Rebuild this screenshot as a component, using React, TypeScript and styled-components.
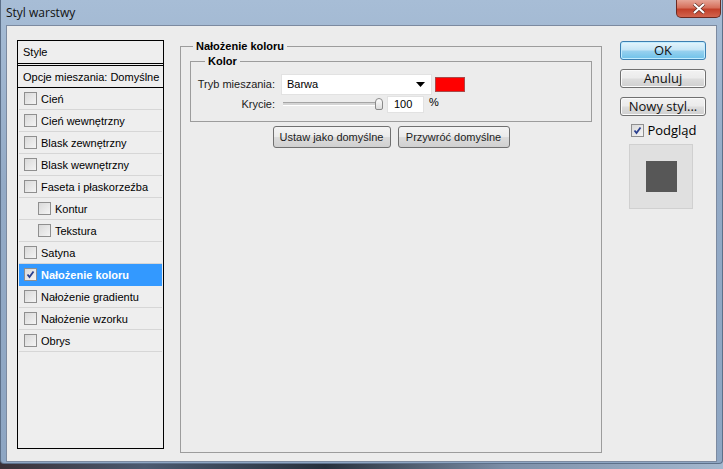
import React, { useState } from 'react';
import styled, { createGlobalStyle } from 'styled-components';

const GlobalStyle = createGlobalStyle`
  html, body {
    margin: 0;
    padding: 0;
    background: #2b2d33;
  }
  body {
    font-family: Tahoma, "Liberation Sans", Arial, sans-serif;
  }
`;

const Desktop = styled.div`
  width: 723px;
  height: 469px;
  overflow: hidden;
  background: linear-gradient(90deg, #3a3036 0%, #4b5a70 20%, #27303c 45%, #7d8fa8 70%, #a4b8cf 100%);
`;

const Frame = styled.div`
  width: 723px;
  height: 464px;
  box-sizing: border-box;
  padding: 0 5px 1px 5px;
  display: flex;
  flex-direction: column;
  background: linear-gradient(180deg, #a7bdd6 0%, #93aac6 40%, #8ea6c3 100%);
  border: 1px solid #5d7089;
  border-top: none;
  border-radius: 0 0 4px 4px;
`;

const TitleBar = styled.div`
  height: 25px;
  display: flex;
  align-items: center;
  justify-content: space-between;
  flex-shrink: 0;
`;

const Title = styled.div`
  font-family: "Open Sans", "Liberation Sans", sans-serif;
  font-size: 12px;
  color: #111;
  margin-top: -1px;
`;

const CloseButton = styled.div`
  width: 45px;
  height: 18px;
  align-self: flex-start;
  margin-right: -4px;
  border: 1px solid #6b2a22;
  border-top: none;
  border-radius: 0 0 5px 5px;
  background: linear-gradient(180deg, #e6a597 0%, #d6705c 45%, #c2402a 55%, #d2644e 100%);
  display: flex;
  align-items: center;
  justify-content: center;
  box-sizing: border-box;
`;

const Content = styled.div`
  flex: 1;
  background: #ececec;
  border: 1px solid #7c8aa0;
  display: flex;
  align-items: flex-start;
  padding: 14px 0 0 10px;
  box-sizing: border-box;
  font-size: 11px;
  color: #000;
  white-space: nowrap;
`;

const StyleList = styled.div`
  width: 147px;
  height: 409px;
  box-sizing: border-box;
  border: 1px solid #000;
  background: #eeeeee;
  display: flex;
  flex-direction: column;
`;

const ListHeader = styled.div`
  height: 22px;
  padding-left: 5px;
  display: flex;
  align-items: center;
  border-bottom: 3px double #000;
`;

const ListBlend = styled.div`
  height: 21px;
  padding-left: 5px;
  display: flex;
  align-items: center;
  border-bottom: 1px solid #000;
`;

const ListItem = styled.div<{ $indent?: boolean; $selected?: boolean }>`
  height: 21px;
  display: flex;
  align-items: center;
  gap: 4px;
  padding-left: ${(p) => (p.$indent ? 19 : 5)}px;
  margin: 0 1px;
  border-bottom: 1px solid ${(p) => (p.$selected ? '#3399ff' : '#d6d6d6')};
  background: ${(p) => (p.$selected ? '#3399ff' : 'transparent')};
  color: ${(p) => (p.$selected ? '#fff' : '#000')};
  font-weight: ${(p) => (p.$selected ? 'bold' : 'normal')};
`;

const Box = styled.span`
  width: 11px;
  height: 11px;
  border: 1px solid #8f8f8f;
  background: linear-gradient(135deg, #d9d9d9 0%, #f4f4f4 100%);
  display: inline-flex;
  align-items: center;
  justify-content: center;
  flex-shrink: 0;
`;

const Check = () => (
  <svg width="9" height="9" viewBox="0 0 9 9">
    <path d="M1.5 4.5 L3.5 7 L7.5 1.5" stroke="#2a3f8f" strokeWidth="1.8" fill="none" />
  </svg>
);

const Main = styled.fieldset`
  width: 422px;
  height: 413px;
  box-sizing: border-box;
  margin: 0 0 0 16px;
  padding: 0 9px;
  border: 1px solid #9c9c9c;
  border-radius: 0;
  display: flex;
  flex-direction: column;
  align-items: center;
`;

const Legend = styled.legend<{ $inset?: number }>`
  font-weight: bold;
  padding: 0 3px;
  margin-left: ${(p) => p.$inset ?? 3}px;
`;

const Inner = styled.fieldset`
  align-self: stretch;
  margin: 3px 0 0 0;
  padding: 7px 0 7px 0;
  border: 1px solid #9c9c9c;
  display: flex;
  flex-direction: column;
`;

const FormRow = styled.div`
  display: flex;
  align-items: center;
  height: 20px;
`;

const Label = styled.div`
  width: 84px;
  text-align: right;
  padding-right: 6px;
  color: #1b1b1b;
`;

const Select = styled.div`
  width: 151px;
  height: 21px;
  box-sizing: border-box;
  background: #fff;
  border: 1px solid #e2e2e2;
  display: flex;
  align-items: center;
  justify-content: space-between;
  padding: 0 6px 0 5px;
`;

const Swatch = styled.div`
  width: 30px;
  height: 15px;
  margin-left: 3px;
  background: #ff0000;
  border: 1px solid #a94a4a;
  box-sizing: border-box;
`;

const Slider = styled.div`
  position: relative;
  width: 100px;
  height: 16px;
  margin-left: 2px;
  display: flex;
  align-items: center;
`;

const Track = styled.div`
  width: 100%;
  height: 2px;
  border-top: 1px solid #a5a5a5;
  border-bottom: 1px solid #fff;
  background: #d4d4d4;
`;

const Thumb = styled.div`
  position: absolute;
  right: 0;
  top: 2px;
  width: 8px;
  height: 12px;
  box-sizing: border-box;
  border: 1px solid #8a8a8a;
  border-radius: 4px 4px 2px 2px;
  background: linear-gradient(180deg, #fdfdfd, #dcdcdc);
`;

const NumberBox = styled.div`
  width: 37px;
  height: 17px;
  margin-left: 4px;
  box-sizing: border-box;
  background: #fff;
  border: 1px solid #e2e2e2;
  display: flex;
  align-items: center;
  padding-left: 6px;
`;

const Unit = styled.div`
  margin-left: 5px;
  margin-top: -4px;
`;

const ButtonRow = styled.div`
  display: flex;
  gap: 7px;
  margin-top: 4px;
`;

const PsButton = styled.div<{ $w: number }>`
  width: ${(p) => p.$w}px;
  height: 22px;
  box-sizing: border-box;
  border: 1px solid #707070;
  border-radius: 3px;
  background: linear-gradient(180deg, #f4f4f4 0%, #ebebeb 48%, #dcdcdc 52%, #d0d0d0 100%);
  display: flex;
  align-items: center;
  justify-content: center;
  color: #1c1c1c;
`;

const Side = styled.div`
  margin-left: 18px;
  width: 86px;
  display: flex;
  flex-direction: column;
  align-items: center;
  gap: 9px;
  padding-top: 1px;
  font-family: "Open Sans", "Liberation Sans", sans-serif;
  font-size: 13px;
`;

const WinButton = styled.div<{ $default?: boolean }>`
  width: 86px;
  height: 19px;
  box-sizing: border-box;
  border: 1px solid ${(p) => (p.$default ? '#3c7fb1' : '#707070')};
  border-radius: 3px;
  background: ${(p) =>
    p.$default
      ? 'linear-gradient(180deg, #e5f5fc 0%, #c4e5f6 48%, #98d1ef 52%, #6ec2ea 100%)'
      : 'linear-gradient(180deg, #f2f2f2 0%, #ebebeb 48%, #dddddd 52%, #cfcfcf 100%)'};
  box-shadow: ${(p) => (p.$default ? 'inset 0 0 0 1px #c0ecff' : 'inset 0 0 0 1px #fafafa')};
  display: flex;
  align-items: center;
  justify-content: center;
  line-height: 1;
  color: #111;
`;

const PreviewCheck = styled.div`
  display: flex;
  align-items: center;
  gap: 3px;
  margin-top: -4px;
  margin-left: 2px;
`;

const Preview = styled.div`
  width: 64px;
  height: 65px;
  margin-top: -4px;
  margin-left: -4px;
  background: #e0e0e0;
  border: 1px solid #d0d0d0;
  box-sizing: border-box;
  display: flex;
  align-items: center;
  justify-content: center;
`;

const PreviewSquare = styled.div`
  width: 31px;
  height: 31px;
  background: #575757;
`;

const styles = [
  { name: 'Cień' },
  { name: 'Cień wewnętrzny' },
  { name: 'Blask zewnętrzny' },
  { name: 'Blask wewnętrzny' },
  { name: 'Faseta i płaskorzeźba' },
  { name: 'Kontur', indent: true },
  { name: 'Tekstura', indent: true },
  { name: 'Satyna' },
  { name: 'Nałożenie koloru', checked: true },
  { name: 'Nałożenie gradientu' },
  { name: 'Nałożenie wzorku' },
  { name: 'Obrys' },
];

export default function App() {
  const [selected] = useState('Nałożenie koloru');

  return (
    <Desktop>
      <GlobalStyle />
      <Frame>
        <TitleBar>
          <Title>Styl warstwy</Title>
          <CloseButton>
            <svg width="14" height="11" viewBox="0 0 14 11">
              <path d="M2 1 L12 10 M12 1 L2 10" stroke="#5a2a20" strokeWidth="3.4" />
              <path d="M2 1 L12 10 M12 1 L2 10" stroke="#fff" strokeWidth="2.2" />
            </svg>
          </CloseButton>
        </TitleBar>
        <Content>
          <StyleList>
            <ListHeader>Style</ListHeader>
            <ListBlend>Opcje mieszania: Domyślne</ListBlend>
            {styles.map((s) => (
              <ListItem key={s.name} $indent={s.indent} $selected={s.name === selected}>
                <Box>{s.checked && <Check />}</Box>
                {s.name}
              </ListItem>
            ))}
          </StyleList>

          <Main>
            <Legend>Nałożenie koloru</Legend>
            <Inner>
              <Legend $inset={14}>Kolor</Legend>
              <FormRow>
                <Label>Tryb mieszania:</Label>
                <Select>
                  Barwa
                  <svg width="9" height="5" viewBox="0 0 9 5">
                    <path d="M0 0 H9 L4.5 5 Z" fill="#000" />
                  </svg>
                </Select>
                <Swatch />
              </FormRow>
              <FormRow>
                <Label>Krycie:</Label>
                <Slider>
                  <Track />
                  <Thumb />
                </Slider>
                <NumberBox>100</NumberBox>
                <Unit>%</Unit>
              </FormRow>
            </Inner>
            <ButtonRow>
              <PsButton $w={118}>Ustaw jako domyślne</PsButton>
              <PsButton $w={112}>Przywróć domyślne</PsButton>
            </ButtonRow>
          </Main>

          <Side>
            <WinButton $default>OK</WinButton>
            <WinButton>Anuluj</WinButton>
            <WinButton>Nowy styl...</WinButton>
            <PreviewCheck>
              <Box>
                <Check />
              </Box>
              Podgląd
            </PreviewCheck>
            <Preview>
              <PreviewSquare />
            </Preview>
          </Side>
        </Content>
      </Frame>
    </Desktop>
  );
}
